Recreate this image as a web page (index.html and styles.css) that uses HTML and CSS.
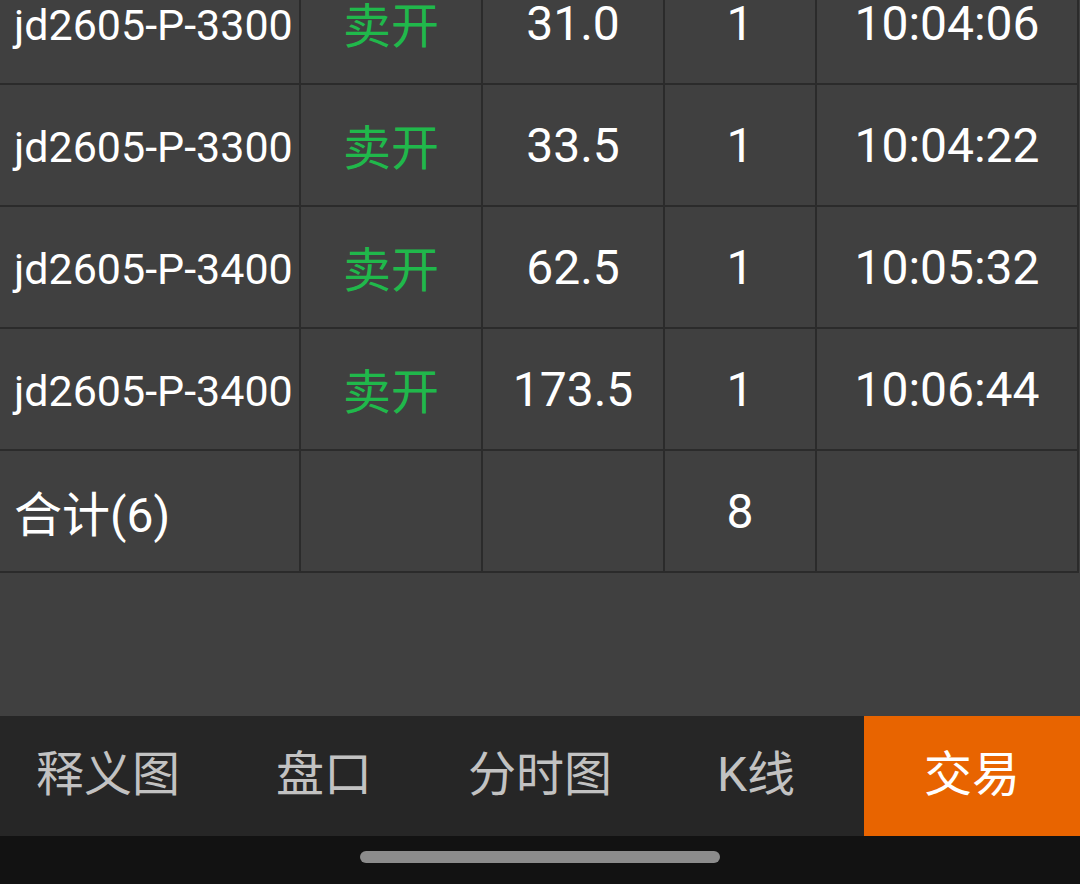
FILE: index.html
```html
<!DOCTYPE html>
<html lang="zh-CN">
<head>
  <meta charset="UTF-8" />
  <meta name="viewport" content="width=device-width, initial-scale=1.0"/>
  <title>成交明细</title>
  <link rel="stylesheet" href="styles.css">
</head>
<body>

  <div class="screen">
    <div class="content">
      <div class="trades">
        <div class="row">
          <div class="cell name">jd2605-P-3300</div>
          <div class="cell side">卖开</div>
          <div class="cell">31.0</div>
          <div class="cell">1</div>
          <div class="cell">10:04:06</div>
        </div>
        <div class="row">
          <div class="cell name">jd2605-P-3300</div>
          <div class="cell side">卖开</div>
          <div class="cell">33.5</div>
          <div class="cell">1</div>
          <div class="cell">10:04:22</div>
        </div>
        <div class="row">
          <div class="cell name">jd2605-P-3400</div>
          <div class="cell side">卖开</div>
          <div class="cell">62.5</div>
          <div class="cell">1</div>
          <div class="cell">10:05:32</div>
        </div>
        <div class="row">
          <div class="cell name">jd2605-P-3400</div>
          <div class="cell side">卖开</div>
          <div class="cell">173.5</div>
          <div class="cell">1</div>
          <div class="cell">10:06:44</div>
        </div>
        <!-- total row -->
        <div class="row">
          <div class="cell total">合计(6)</div>
          <div class="cell"></div>
          <div class="cell"></div>
          <div class="cell">8</div>
          <div class="cell"></div>
        </div>
      </div>
    </div>

    <div class="tabbar">
      <div class="tab">释义图</div>
      <div class="tab">盘口</div>
      <div class="tab">分时图</div>
      <div class="tab">K线</div>
      <div class="tab active">交易</div>
    </div>

    <div class="navbar">
      <div class="home-handle"></div>
    </div>
  </div>

</body>
</html>
```

FILE: styles.css
```css
body {
  margin: 0;
  padding: 0;
  background: #404040;
  font-family: Roboto, "Noto Sans CJK SC", sans-serif;
  color: #fff;
}

.screen {
  width: 1080px;
  height: 884px;
  display: flex;
  flex-direction: column;
  overflow: hidden;
}

.content {
  flex: 1;
  overflow: hidden;
  background: #404040;
}

/* list is scrolled, first row only partly visible */
.trades {
  margin-top: -37px;
}

.row {
  display: grid;
  grid-template-columns: 301px 182px 182px 152px 262px;
  height: 122px;
}

.cell {
  display: flex;
  align-items: center;
  justify-content: center;
  border-right: 2px solid #2b2b2b;
  border-bottom: 2px solid #2b2b2b;
  font-size: 48px;
  white-space: nowrap;
  color: #fff;
}

.cell.name,
.cell.total {
  justify-content: flex-start;
  padding-left: 14px;
}

/* contract code is shrunk to fit its column */
.cell.name {
  font-size: 43px;
  padding-top: 3px;
}

.cell.side {
  color: #20b84b;
  padding-bottom: 3px;
}

.tabbar {
  height: 120px;
  display: flex;
  background: #262626;
}

.tab {
  flex: 1;
  display: flex;
  align-items: center;
  justify-content: center;
  font-size: 48px;
  color: #c2c2c2;
  padding-bottom: 12px;
}

.tab.active {
  background: #e86400;
  color: #fff;
}

.navbar {
  height: 48px;
  background: #121212;
  display: flex;
  justify-content: center;
  padding-top: 15px;
  box-sizing: border-box;
}

.home-handle {
  width: 360px;
  height: 12px;
  border-radius: 6px;
  background: #8c8c8c;
}
```
